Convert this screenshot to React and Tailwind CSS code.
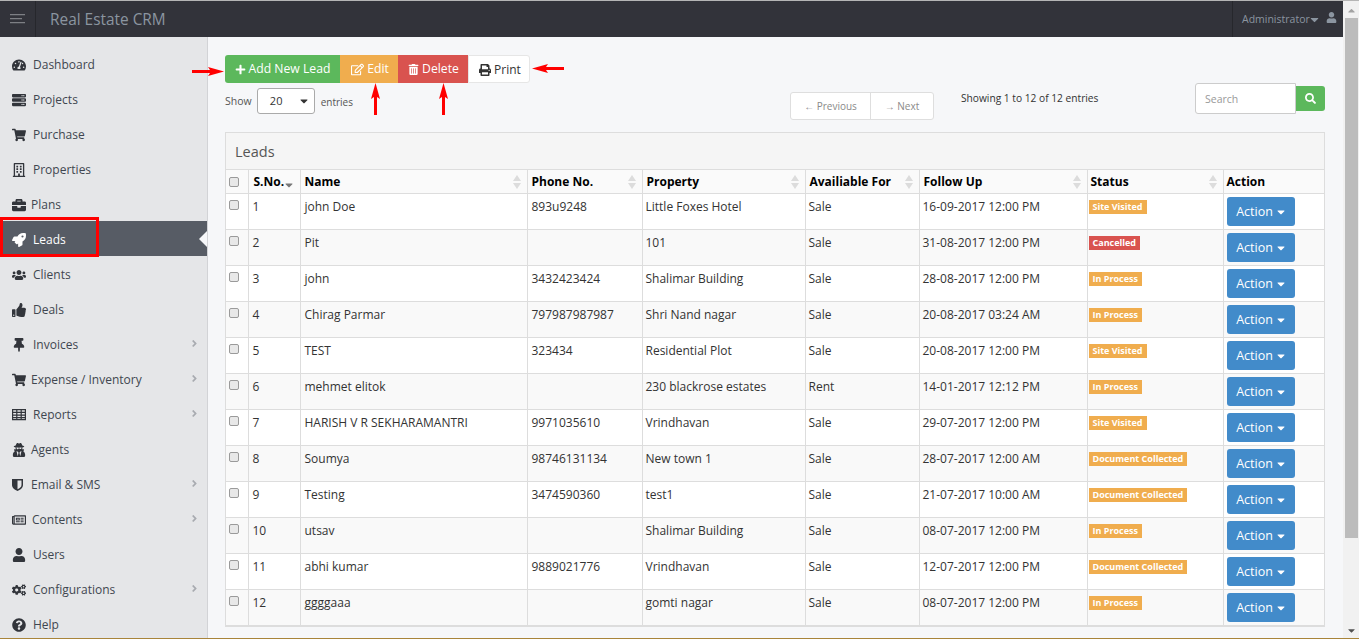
import React from "react";
import {
  FaTachometerAlt, FaServer, FaShoppingCart, FaRegBuilding, FaBriefcase, FaRocket, FaUsers, FaThumbsUp,
  FaThumbtack, FaUserSecret, FaRegNewspaper, FaUser, FaCogs, FaQuestionCircle,
  FaPlus, FaRegEdit, FaTrashAlt, FaPrint, FaSearch, FaCaretDown, FaCaretUp, FaAngleRight,
} from "react-icons/fa";

const GridIcon = ({ className }) => (
  <svg className={className} width="14" height="13" viewBox="0 0 14 13" fill="none" stroke="currentColor" strokeWidth="1.2">
    <path d="M.6 1.6h12.8v10H.6zM.6 4.4h12.8M.6 7.2h12.8M.6 9.6h12.8M4.8 1.6v10M9.2 1.6v10" />
  </svg>
);

const ShieldIcon = ({ className }) => (
  <svg className={className} width="11" height="13" viewBox="0 0 11 13">
    <path d="M0 1h11v6c0 3-3 5-5.500 6C3 12 0 10 0 7z" fill="currentColor" />
    <path d="M5.500 2.500H9.500V7c0 2-2 3.400-4 4.300z" fill="#e5e6e8" />
  </svg>
);

const menu = [
  { label: "Dashboard", icon: FaTachometerAlt, x: 33 },
  { label: "Projects", icon: FaServer, x: 33 },
  { label: "Purchase", icon: FaShoppingCart, x: 33 },
  { label: "Properties", icon: FaRegBuilding, x: 33 },
  { label: "Plans", icon: FaBriefcase, x: 31 },
  { label: "Leads", icon: FaRocket, x: 33, active: true },
  { label: "Clients", icon: FaUsers, x: 33 },
  { label: "Deals", icon: FaThumbsUp, x: 33 },
  { label: "Invoices", icon: FaThumbtack, x: 33, more: true },
  { label: "Expense / Inventory", icon: FaShoppingCart, x: 31, more: true },
  { label: "Reports", icon: GridIcon, x: 33, more: true },
  { label: "Agents", icon: FaUserSecret, x: 31 },
  { label: "Email & SMS", icon: ShieldIcon, x: 31, more: true },
  { label: "Contents", icon: FaRegNewspaper, x: 32, more: true },
  { label: "Users", icon: FaUser, x: 33 },
  { label: "Configurations", icon: FaCogs, x: 33, more: true },
  { label: "Help", icon: FaQuestionCircle, x: 33 },
];

const leads = [
  [1, "john Doe", "893u9248", "Little Foxes Hotel", "Sale", "16-09-2017 12:00 PM", "Site Visited", "w"],
  [2, "Pit", "", "101", "Sale", "31-08-2017 12:00 PM", "Cancelled", "d"],
  [3, "john", "3432423424", "Shalimar Building", "Sale", "28-08-2017 12:00 PM", "In Process", "w"],
  [4, "Chirag Parmar", "797987987987", "Shri Nand nagar", "Sale", "20-08-2017 03:24 AM", "In Process", "w"],
  [5, "TEST", "323434", "Residential Plot", "Sale", "20-08-2017 12:00 PM", "Site Visited", "w"],
  [6, "mehmet elitok", "", "230 blackrose estates", "Rent", "14-01-2017 12:12 PM", "In Process", "w"],
  [7, "HARISH V R SEKHARAMANTRI", "9971035610", "Vrindhavan", "Sale", "29-07-2017 12:00 PM", "Site Visited", "w"],
  [8, "Soumya", "98746131134", "New town 1", "Sale", "28-07-2017 12:00 AM", "Document Collected", "w"],
  [9, "Testing", "3474590360", "test1", "Sale", "21-07-2017 10:00 AM", "Document Collected", "w"],
  [10, "utsav", "", "Shalimar Building", "Sale", "08-07-2017 12:00 PM", "In Process", "w"],
  [11, "abhi kumar", "9889021776", "Vrindhavan", "Sale", "12-07-2017 12:00 PM", "Document Collected", "w"],
  [12, "ggggaaa", "", "gomti nagar", "Sale", "08-07-2017 12:00 PM", "In Process", "w"],
];

const headers = ["Name", "Phone No.", "Property", "Availiable For", "Follow Up", "Status"];

// the red annotation arrows
const Arrow = ({ className, dir }) => (
  <svg className={`absolute ${className}`} width={dir === "up" ? 9 : 32} height={dir === "up" ? 32 : 9} viewBox={dir === "up" ? "0 0 9 32" : "0 0 32 9"}>
    {dir === "right" && <path d="M0 3h18L16 0l16 4.500L16 9l2-3H0z" fill="#f00" />}
    {dir === "left" && <path d="M32 3H14L16 0 0 4.500 16 9l-2-3h18z" fill="#f00" />}
    {dir === "up" && <path d="M3 32V14L0 16 4.500 0 9 16l-3-2v18z" fill="#f00" />}
  </svg>
);

const Checkbox = () => (
  <span className="block w-[10px] h-[10px] rounded-[2px] border border-[#9a9a9a] bg-[#e8e8e8]" />
);

const Sort = () => (
  <svg className="absolute right-[6px] top-[5px] text-[#dcdcdc]" width="8" height="14" viewBox="0 0 8 14" fill="currentColor">
    <path d="M4 0l4 6H0zM4 14l4-6H0z" />
  </svg>
);

export default function App() {
  return (
    <div className="relative h-[639px] overflow-hidden flex flex-col bg-[#f6f7f9] text-[12px] text-[#333] font-['Open_Sans',sans-serif]">
      <div className="h-[1px] bg-[#b5b5b5] shrink-0" />
      <div className="flex flex-1 min-h-0">
        <div className="flex-1 min-w-0 flex flex-col">
          <header className="h-[36px] bg-[#32333a] flex items-center text-[#8b95a0] shrink-0">
            <div className="w-[36px] h-full border-r border-[#26272c] flex items-center justify-center">
              <svg width="15" height="10" viewBox="0 0 15 10" fill="#7d7f84"><path d="M0 0h15v1.300H0zM0 4h12v1.300H0zM0 8h15v1.300H0z" /></svg>
            </div>
            <div className="ml-[14px] pt-[1px] text-[15.4px]">Real Estate CRM</div>
            <div className="ml-auto w-[111px] h-full border-l border-[#26272c] flex items-center pl-[9px]">
              <span className="text-[10.5px] pt-[1px]">Administrator</span>
              <FaCaretDown className="text-[13px] -ml-[2px]" />
              <FaUser className="text-[11px] ml-[5px] mb-[3px]" />
            </div>
          </header>

          <div className="flex flex-1 min-h-0">
            <aside className="w-[208px] bg-[#e5e6e8] border-r border-[#d2d3d6] pt-[9px] text-[#3f4650] text-[12px] shrink-0">
              {menu.map((m) => {
                const Icon = m.icon;
                return (
                  <div key={m.label} className={`relative h-[35px] flex items-center ${m.active ? "bg-[#575c65] text-white" : ""}`}>
                    <span className="w-[31px] pl-[12px] pt-[2px] shrink-0 flex"><Icon className={`text-[14px] ${m.active ? "text-white" : "text-[#32353b]"}`} /></span>
                    <span className={`pt-[3px] ${m.x === 33 ? "ml-[2px]" : m.x === 32 ? "ml-[1px]" : ""}`}>{m.label}</span>
                    {m.more && <FaAngleRight className="absolute right-[7px] top-[12px] text-[11px] text-[#a8abb0]" />}
                    {m.active && <span className="absolute right-0 top-[10px] w-0 h-0 border-y-[8px] border-y-transparent border-r-[8px] border-r-[#f6f7f9]" />}
                  </div>
                );
              })}
            </aside>

            <main className="flex-1 min-w-0 pl-[17px] pr-[18px] pt-[18px]">
              <div className="flex h-[28px] text-[12.2px]">
                <button className="w-[115px] rounded-l-[3px] bg-[#5cb85c] text-white flex items-center justify-center gap-[3px] pt-[1px]"><FaPlus className="text-[11px]" />Add New Lead</button>
                <button className="w-[58px] bg-[#f0ad4e] text-white flex items-center justify-center gap-[3px] pt-[1px] pl-[2px]"><FaRegEdit className="text-[13px]" />Edit</button>
                <button className="w-[70px] bg-[#d9534f] text-white flex items-center justify-center gap-[3px] pt-[1px] pl-[1px]"><FaTrashAlt className="text-[11px]" />Delete</button>
                <button className="w-[62px] rounded-r-[3px] bg-white border border-[#e6e6e6] text-[#333] text-[12px] flex items-center justify-center gap-[3px] pt-[1px] pl-[2px]"><FaPrint className="text-[12px]" />Print</button>
              </div>

              <div className="flex items-start h-[49px] text-[10.5px]">
                <div className="flex items-center mt-[5px] w-[128px] shrink-0">
                  <span className="text-[#555] w-[32px] pt-[2px]">Show</span>
                  <div className="w-[58px] h-[26px] rounded-[3px] border border-[#aaa] bg-white flex items-center justify-between pl-[12px] pr-[4px] text-[11px]">
                    20<FaCaretDown className="text-[12px]" />
                  </div>
                  <span className="ml-[6px] text-[#555] text-[10px] pt-[2px]">entries</span>
                </div>
                <div className="ml-[437px] mt-[9px] w-[144px] h-[28px] rounded-[3px] border border-[#dedede] bg-white flex items-center text-[#8a8a8a] text-[10px]">
                  <span className="w-[80px] h-full border-r border-[#dedede] flex items-center justify-center pt-[1px]">← Previous</span>
                  <span className="flex-1 flex items-center justify-center pt-[1px]">→ Next</span>
                </div>
                <div className="ml-[27px] mt-[8px] text-[10.2px]">Showing 1 to 12 of 12 entries</div>
                <div className="ml-auto flex items-center">
                  <div className="w-[101px] h-[31px] border border-[#ccc] rounded-l-[3px] bg-white pl-[9px] pt-[2px] flex items-center text-[10.5px] text-[#999]">Search</div>
                  <div className="w-[29px] h-[25px] rounded-r-[3px] bg-[#5cb85c] flex items-center justify-center text-white"><FaSearch className="text-[11px]" /></div>
                </div>
              </div>

              <section className="border border-[#dddddd] bg-white">
                <div className="h-[36px] bg-[#f5f5f5] flex items-center pl-[9px] pt-[1px] text-[14.5px] text-[#555]">Leads</div>
                <table className="w-full table-fixed border-collapse">
                  <colgroup>
                    <col className="w-[22px]" />
                    <col className="w-[52px]" />
                    <col className="w-[227px]" />
                    <col className="w-[115px]" />
                    <col className="w-[163px]" />
                    <col className="w-[114px]" />
                    <col className="w-[168px]" />
                    <col className="w-[136px]" />
                    <col />
                  </colgroup>
                  <thead>
                    <tr className="h-[24px] bg-[#fafafa] text-black text-left">
                      <th className="border border-[#ddd] border-l-0 pl-[3px]"><Checkbox /></th>
                      <th className="relative border border-[#ddd] pl-[5px] pt-[1px] font-bold">S.No.<FaCaretDown className="absolute left-[34px] top-[9px] text-[12px] text-[#777]" /></th>
                      {headers.map((h) => (
                        <th key={h} className={`relative border border-[#ddd] pt-[1px] font-bold ${h === "Status" ? "pl-[3px]" : "pl-[4px]"}`}>{h}<Sort /></th>
                      ))}
                      <th className="border border-[#ddd] border-r-0 pl-[3px] pt-[1px] font-bold">Action</th>
                    </tr>
                  </thead>
                  <tbody>
                    {leads.map((r, i) => (
                      <tr key={r[0]} className={`h-[36px] align-top ${i % 2 ? "bg-[#f9f9f9]" : "bg-white"}`}>
                        <td className="border border-[#ddd] border-l-0 pl-[3px] pt-[6px]"><Checkbox /></td>
                        {r.slice(0, 6).map((c, j) => (
                          <td key={j} className={`border border-[#ddd] pt-[4px] ${j < 3 ? "pl-[4px]" : "pl-[3px]"}`}>{c}</td>
                        ))}
                        <td className="border border-[#ddd] pl-[1px] pt-[6px]">
                          <span className={`block w-fit h-[14px] px-[4px] text-[9px] leading-[14px] font-bold text-white ${r[7] === "d" ? "bg-[#d9534f]" : "bg-[#f0ad4e]"}`}>{r[6]}</span>
                        </td>
                        <td className="border border-[#ddd] border-r-0 pl-[3px] pt-[3px]">
                          <button className="w-[68px] h-[29px] rounded-[3px] bg-[#428bca] text-white text-[12.500px] flex items-center justify-center gap-[2px] pl-[2px] pt-[1px]">Action<FaCaretDown className="text-[12px]" /></button>
                        </td>
                      </tr>
                    ))}
                  </tbody>
                </table>
              </section>
            </main>
          </div>
        </div>

        <div className="w-[16px] bg-[#f1f1f1] flex flex-col items-center shrink-0 relative">
          <FaCaretUp className="text-[11px] text-[#a3a3a3] mt-[4px]" />
          <div className="w-[13px] h-[520px] bg-[#bcbcbc] mt-[2px] ml-[1px]" />
          <FaCaretDown className="absolute bottom-[2px] text-[11px] text-[#505050]" />
        </div>
      </div>
      <div className="h-[1px] bg-[#a8843a] shrink-0" />

      {/* annotations on top of the screenshot */}
      <div className="absolute left-0 top-[217px] w-[99px] h-[40px] border-[3px] border-[#f00]" />
      <Arrow dir="right" className="left-[192px] top-[67px]" />
      <Arrow dir="left" className="left-[532px] top-[64px]" />
      <Arrow dir="up" className="left-[371px] top-[83px]" />
      <Arrow dir="up" className="left-[439px] top-[83px]" />
    </div>
  );
}
